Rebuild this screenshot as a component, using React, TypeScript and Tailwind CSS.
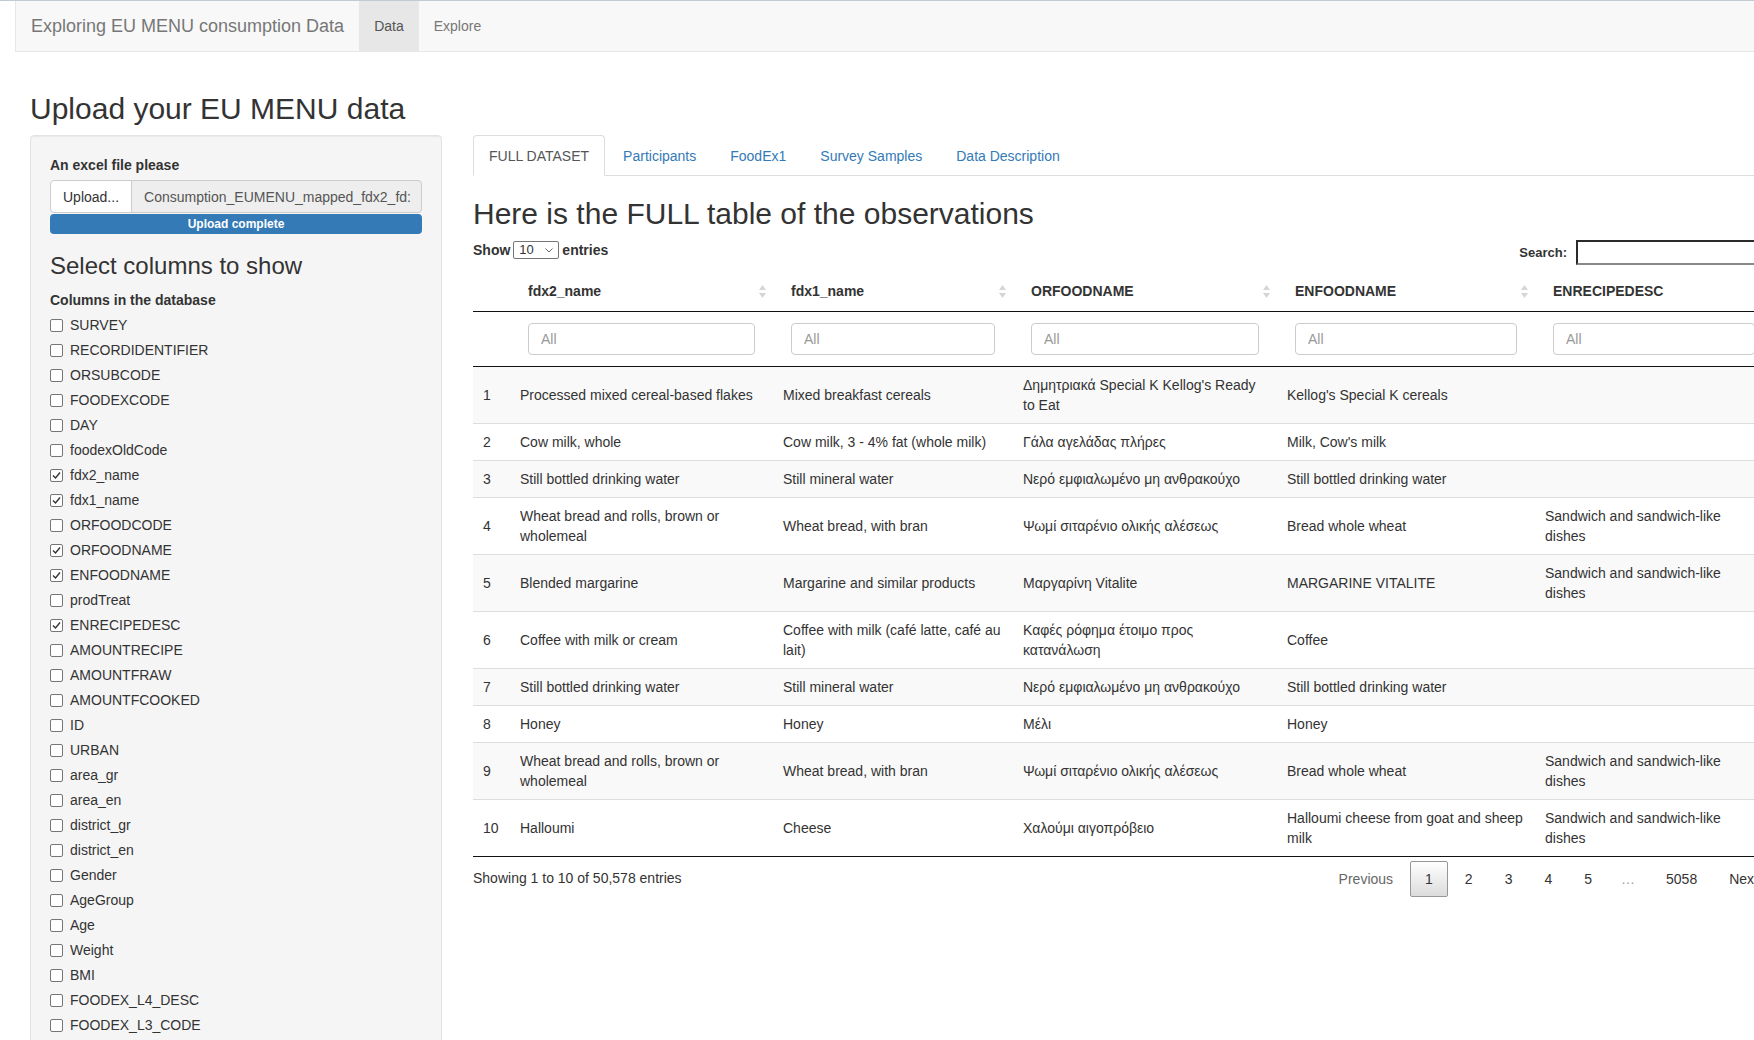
import React from "react"

const columnNames = [
  "SURVEY",
  "RECORDIDENTIFIER",
  "ORSUBCODE",
  "FOODEXCODE",
  "DAY",
  "foodexOldCode",
  "fdx2_name",
  "fdx1_name",
  "ORFOODCODE",
  "ORFOODNAME",
  "ENFOODNAME",
  "prodTreat",
  "ENRECIPEDESC",
  "AMOUNTRECIPE",
  "AMOUNTFRAW",
  "AMOUNTFCOOKED",
  "ID",
  "URBAN",
  "area_gr",
  "area_en",
  "district_gr",
  "district_en",
  "Gender",
  "AgeGroup",
  "Age",
  "Weight",
  "BMI",
  "FOODEX_L4_DESC",
  "FOODEX_L3_CODE",
]

const checked = ["fdx2_name", "fdx1_name", "ORFOODNAME", "ENFOODNAME", "ENRECIPEDESC"]

const headers = ["fdx2_name", "fdx1_name", "ORFOODNAME", "ENFOODNAME", "ENRECIPEDESC"]

const sandwich = "Sandwich and sandwich-like dishes"

const rows = [
  ["1", "Processed mixed cereal-based flakes", "Mixed breakfast cereals", "Δημητριακά Special K Kellog's Ready to Eat", "Kellog's Special K cereals", ""],
  ["2", "Cow milk, whole", "Cow milk, 3 - 4% fat (whole milk)", "Γάλα αγελάδας πλήρες", "Milk, Cow's milk", ""],
  ["3", "Still bottled drinking water", "Still mineral water", "Νερό εμφιαλωμένο μη ανθρακούχο", "Still bottled drinking water", ""],
  ["4", "Wheat bread and rolls, brown or wholemeal", "Wheat bread, with bran", "Ψωμί σιταρένιο ολικής αλέσεως", "Bread whole wheat", sandwich],
  ["5", "Blended margarine", "Margarine and similar products", "Μαργαρίνη Vitalite", "MARGARINE VITALITE", sandwich],
  ["6", "Coffee with milk or cream", "Coffee with milk (café latte, café au lait)", "Καφές ρόφημα έτοιμο προς κατανάλωση", "Coffee", ""],
  ["7", "Still bottled drinking water", "Still mineral water", "Νερό εμφιαλωμένο μη ανθρακούχο", "Still bottled drinking water", ""],
  ["8", "Honey", "Honey", "Μέλι", "Honey", ""],
  ["9", "Wheat bread and rolls, brown or wholemeal", "Wheat bread, with bran", "Ψωμί σιταρένιο ολικής αλέσεως", "Bread whole wheat", sandwich],
  ["10", "Halloumi", "Cheese", "Χαλούμι αιγοπρόβειο", "Halloumi cheese from goat and sheep milk", sandwich],
]

const SortIcon = () => (
  <svg width="7" height="13" viewBox="0 0 7 13" className="shrink-0">
    <polygon points="0,5 3.5,0 7,5" fill="#d6d6d6" />
    <polygon points="0,8 3.5,13 7,8" fill="#d6d6d6" />
  </svg>
)

const Checkbox = ({ on }: { on: boolean }) => (
  <span className="flex h-[13px] w-[13px] shrink-0 items-center justify-center rounded-[2px] border border-[#767676] bg-white">
    {on && (
      <svg width="9" height="9" viewBox="0 0 9 9">
        <polyline points="1,4.5 3.5,7 8,1.5" fill="none" stroke="#333" strokeWidth="1.4" />
      </svg>
    )}
  </span>
)

const Sidebar = () => {
  return (
    <aside className="w-[412px] shrink-0 rounded border border-[#e3e3e3] bg-[#f5f5f5] p-[19px] shadow-[inset_0_1px_1px_rgba(0,0,0,0.05)]">
      <div className="mb-[5px] font-bold">An excel file please</div>
      <div className="flex h-[33px]">
        <div className="flex items-center rounded-l border border-[#ccc] bg-white px-[12px]">Upload...</div>
        <div className="-ml-px flex min-w-0 flex-1 items-center overflow-hidden whitespace-nowrap rounded-r border border-[#ccc] bg-[#eee] pl-[12px] pr-[5px] text-[#555]">
          <span className="overflow-hidden">Consumption_EUMENU_mapped_fdx2_fd:</span>
        </div>
      </div>
      <div className="mt-[1px] h-[20px] rounded bg-[#337ab7] text-center text-[12px] font-bold leading-[20px] text-white">
        Upload complete
      </div>
      <h3 className="mt-[19px] mb-[11px] text-[24px] leading-[26px]">Select columns to show</h3>
      <div className="mb-[5px] font-bold">Columns in the database</div>
      <div className="flex flex-col gap-[5px]">
        {columnNames.map((name) => (
          <div key={name} className="flex h-[20px] items-center">
            <Checkbox on={checked.includes(name)} />
            <span className="ml-[7px]">{name}</span>
          </div>
        ))}
      </div>
    </aside>
  )
}

const DataPanel = () => {
  return (
    <main className="ml-[31px] w-[1300px] shrink-0">
      <ul className="flex h-[41px] border-b border-[#ddd]">
        <li className="-mb-px mr-[2px] rounded-t border border-[#ddd] border-b-white bg-white px-[15px] py-[10px] text-[#555]">
          FULL DATASET
        </li>
        <li className="mr-[2px] border border-transparent px-[15px] py-[10px] text-[#337ab7]">Participants</li>
        <li className="mr-[2px] border border-transparent px-[15px] py-[10px] text-[#337ab7]">FoodEx1</li>
        <li className="mr-[2px] border border-transparent px-[15px] py-[10px] text-[#337ab7]">Survey Samples</li>
        <li className="mr-[2px] border border-transparent px-[15px] py-[10px] text-[#337ab7]">Data Description</li>
      </ul>

      <h2 className="mt-[21px] mb-[10px] text-[30px] leading-[33px]">Here is the FULL table of the observations</h2>

      <div className="flex h-[26px] items-start justify-between font-bold">
        <div className="mt-[1px] flex h-[18px] items-center text-[14px]">
          <span>Show</span>
          <div className="mx-[3px] flex h-[18px] w-[46px] items-center justify-between rounded-[2px] border border-[#767676] bg-white pl-[5px] pr-[5px] text-[13px] font-normal">
            <span>10</span>
            <svg width="8" height="5" viewBox="0 0 8 5">
              <polyline points="0.5,0.5 4,4 7.5,0.5" fill="none" stroke="#666" strokeWidth="1" />
            </svg>
          </div>
          <span>entries</span>
        </div>
        <div className="flex h-[25px] items-center text-[13px]">
          <span>Search:</span>
          <div className="ml-[9px] h-[25px] w-[197px] border-2 border-[#2b2b2b] border-b-[#888] bg-white" />
        </div>
      </div>

      <table className="mt-[5px] w-full table-fixed border-collapse">
        <colgroup>
          <col className="w-[37px]" />
          <col className="w-[263px]" />
          <col className="w-[240px]" />
          <col className="w-[264px]" />
          <col className="w-[258px]" />
          <col />
        </colgroup>
        <thead>
          <tr className="border-b border-[#111]">
            <th />
            {headers.map((h) => (
              <th key={h} className="py-[10px] pl-[18px] pr-[7px] text-left font-bold">
                <div className="flex items-center justify-between">
                  <span>{h}</span>
                  <SortIcon />
                </div>
              </th>
            ))}
          </tr>
          <tr className="border-b border-[#111]">
            <td />
            {headers.map((h) => (
              <td key={h} className="px-[18px] py-[11px]">
                <input
                  readOnly
                  placeholder="All"
                  className="h-[32px] w-full rounded border border-[#ccc] bg-white px-[12px] text-[14px] outline-none placeholder:text-[#999]"
                />
              </td>
            ))}
          </tr>
        </thead>
        <tbody className="border-b border-[#111]">
          {rows.map((r, i) => (
            <tr key={r[0]} className={(i % 2 === 0 ? "bg-[#f9f9f9] " : "bg-white ") + (i > 0 ? "border-t border-[#ddd]" : "")}>
              {r.map((cell, j) => (
                <td key={j} className="px-[10px] py-[8px] align-middle">
                  {cell}
                </td>
              ))}
            </tr>
          ))}
        </tbody>
      </table>

      <div className="flex items-start justify-between">
        <div className="pt-[11px]">Showing 1 to 10 of 50,578 entries</div>
        <div className="flex items-center pt-[4px]">
          <span className="ml-[2px] border border-transparent px-[14px] py-[7px] text-[#666]">Previous</span>
          <span className="ml-[2px] rounded-[2px] border border-[#979797] bg-linear-to-b from-white to-[#dcdcdc] px-[14px] py-[7px]">1</span>
          <span className="ml-[2px] border border-transparent px-[14px] py-[7px]">2</span>
          <span className="ml-[2px] border border-transparent px-[14px] py-[7px]">3</span>
          <span className="ml-[2px] border border-transparent px-[14px] py-[7px]">4</span>
          <span className="ml-[2px] border border-transparent px-[14px] py-[7px]">5</span>
          <span className="px-[14px] text-[#999]">…</span>
          <span className="ml-[2px] border border-transparent px-[14px] py-[7px]">5058</span>
          <span className="ml-[2px] border border-transparent px-[14px] py-[7px]">Next</span>
        </div>
      </div>
    </main>
  )
}

const App = () => {
  return (
    <div className="min-h-[1040px] w-[1754px] overflow-hidden border-t border-[#c3cad2] bg-white font-['Liberation_Sans',Arial,sans-serif] text-[14px] leading-[20px] text-[#333]">
      <nav className="ml-[15px] flex h-[51px] border-b border-l border-[#e7e7e7] bg-[#f8f8f8] leading-[51px]">
        <span className="px-[15px] text-[18px] text-[#777]">Exploring EU MENU consumption Data</span>
        <span className="bg-[#e7e7e7] px-[15px] text-[#555]">Data</span>
        <span className="px-[15px] text-[#777]">Explore</span>
      </nav>
      <div className="pl-[30px]">
        <h2 className="mt-[40px] mb-[10px] text-[30px] leading-[33px]">Upload your EU MENU data</h2>
        <div className="flex items-start">
          <Sidebar />
          <DataPanel />
        </div>
      </div>
    </div>
  )
}

export default App
